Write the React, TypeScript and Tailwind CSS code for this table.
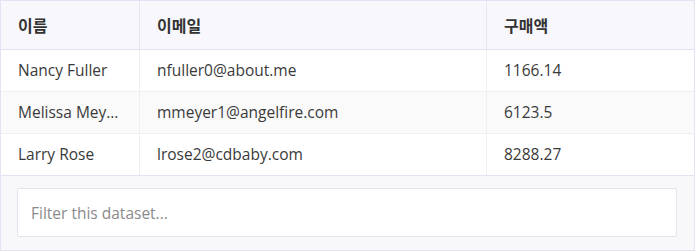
import React from "react";

const rows = [
  { name: "Nancy Fuller", email: "nfuller0@about.me", amount: "1166.14" },
  { name: "Melissa Meyer", email: "mmeyer1@angelfire.com", amount: "6123.5" },
  { name: "Larry Rose", email: "lrose2@cdbaby.com", amount: "8288.27" },
];

export default function App() {
  return (
    <div
      className="w-[695px] h-[252px] bg-white"
      style={{ fontFamily: '"Open Sans", "Noto Sans CJK KR", sans-serif' }}
    >
      <div className="w-[695px] h-[251px] border border-[#e4e2f3] flex flex-col">
        <div
          className="grid grid-cols-[139px_347px_1fr] h-[49px] bg-[#f8f8fc] border-b border-[#e2e0f4] text-[16px] font-bold text-[#333]"
          style={{ fontFamily: '"Noto Sans CJK KR", sans-serif' }}
        >
          <div className="flex items-center pl-[17px] border-r border-[#e8e6f3]">이름</div>
          <div className="flex items-center pl-[17px] border-r border-[#e8e6f3]">이메일</div>
          <div className="flex items-center pl-[17px]">구매액</div>
        </div>
        {rows.map((r, i) => (
          <div
            key={r.email}
            className={
              "grid grid-cols-[139px_347px_1fr] h-[42px] text-[15.5px] text-[#3a3a3a] " +
              (i % 2 === 1 ? "bg-[#fafafa] " : "bg-white ") +
              (i < 2 ? "border-b border-[#efeff3]" : "border-b border-[#e4e2f0]")
            }
          >
            <div className="flex items-center pl-[17px] pr-[18px] border-r border-[#efeff3] min-w-0">
              <span className="truncate w-[103px]">{r.name}</span>
            </div>
            <div className="flex items-center pl-[17px] border-r border-[#efeff3]">{r.email}</div>
            <div className="flex items-center pl-[17px]">{r.amount}</div>
          </div>
        ))}
        <div className="flex-1 bg-[#f8f8fb] px-[16px] pt-[12px]">
          <input
            className="w-[660px] h-[49px] bg-white border border-[#e3e3eb] rounded-[2px] px-[13px] text-[15.5px] text-[#333] placeholder:text-[#8a8a8a] outline-none"
            placeholder="Filter this dataset..."
          />
        </div>
      </div>
    </div>
  );
}
